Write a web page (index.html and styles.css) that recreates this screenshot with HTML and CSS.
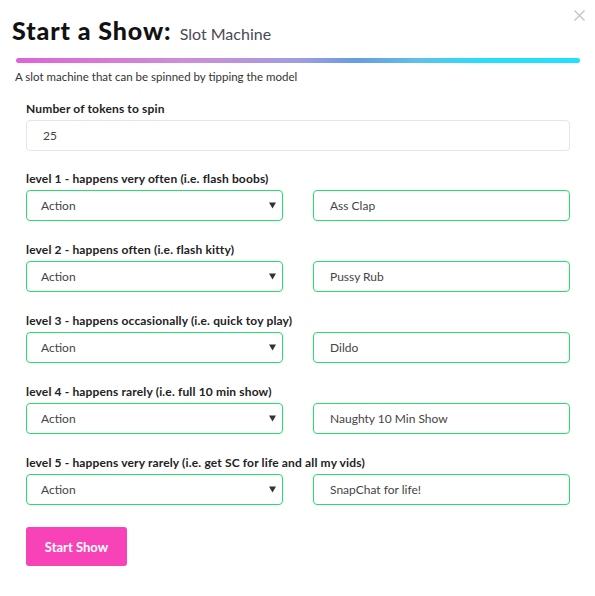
FILE: index.html
```html
<!DOCTYPE html>
<html>
<head>
<meta charset="utf-8">
<link rel="stylesheet" href="styles.css">
</head>
<body>
<div class="modal">
  <button class="close" aria-label="Close">
    <svg width="11" height="11" viewBox="0 0 11 11"><path d="M0.5 0.5 L10.5 10.5 M10.5 0.5 L0.5 10.5" stroke="#c4c4c4" stroke-width="1.4" fill="none"/></svg>
  </button>
  <h1 class="title"><span class="title-main">Start a Show:</span> <span class="title-sub">Slot Machine</span></h1>
  <div class="bar"></div>
  <p class="desc">A slot machine that can be spinned by tipping the model</p>

  <form class="form">
    <div class="group first">
      <label class="label">Number of tokens to spin</label>
      <div class="field plain">25</div>
    </div>

    <div class="group">
      <label class="label">level 1 - happens very often (i.e. flash boobs)</label>
      <div class="row">
        <div class="field ok select"><span>Action</span><svg class="caret" width="7" height="7" viewBox="0 0 7 7"><path d="M0 0.5 H7 L3.5 6.5 Z" fill="#333"/></svg></div>
        <div class="field ok">Ass Clap</div>
      </div>
    </div>

    <div class="group">
      <label class="label">level 2 - happens often (i.e. flash kitty)</label>
      <div class="row">
        <div class="field ok select"><span>Action</span><svg class="caret" width="7" height="7" viewBox="0 0 7 7"><path d="M0 0.5 H7 L3.5 6.5 Z" fill="#333"/></svg></div>
        <div class="field ok">Pussy Rub</div>
      </div>
    </div>

    <div class="group">
      <label class="label">level 3 - happens occasionally (i.e. quick toy play)</label>
      <div class="row">
        <div class="field ok select"><span>Action</span><svg class="caret" width="7" height="7" viewBox="0 0 7 7"><path d="M0 0.5 H7 L3.5 6.5 Z" fill="#333"/></svg></div>
        <div class="field ok">Dildo</div>
      </div>
    </div>

    <div class="group">
      <label class="label">level 4 - happens rarely (i.e. full 10 min show)</label>
      <div class="row">
        <div class="field ok select"><span>Action</span><svg class="caret" width="7" height="7" viewBox="0 0 7 7"><path d="M0 0.5 H7 L3.5 6.5 Z" fill="#333"/></svg></div>
        <div class="field ok">Naughty 10 Min Show</div>
      </div>
    </div>

    <div class="group">
      <label class="label">level 5 - happens very rarely (i.e. get SC for life and all my vids)</label>
      <div class="row">
        <div class="field ok select"><span>Action</span><svg class="caret" width="7" height="7" viewBox="0 0 7 7"><path d="M0 0.5 H7 L3.5 6.5 Z" fill="#333"/></svg></div>
        <div class="field ok">SnapChat for life!</div>
      </div>
    </div>

    <div class="actions">
      <button type="button" class="btn">Start Show</button>
    </div>
  </form>
</div>
</body>
</html>
```

FILE: styles.css
```css
* { box-sizing: border-box; }
html, body {
  margin: 0;
  padding: 0;
  background: #fff;
}
body {
  font-family: Lato, "Open Sans", "Liberation Sans", sans-serif;
  color: #333;
}
.modal {
  position: relative;
  width: 595px;
  height: 596px;
  padding: 12px 15px 0 0;
}
.close {
  position: absolute;
  top: 10px;
  left: 574px;
  padding: 0;
  border: 0;
  background: none;
  line-height: 0;
}
.title {
  margin: 0 0 0 12px;
  line-height: 32px;
  font-weight: normal;
  white-space: nowrap;
}
.title-main {
  font-size: 25px;
  font-weight: 900;
  color: #111;
  letter-spacing: 0.9px;
}
.title-sub {
  font-size: 16px;
  color: #4a4a55;
  margin-left: 0;
}
.bar {
  margin: 8px 0 0 16px;
  height: 5px;
  border-radius: 3px;
  background: linear-gradient(90deg, #e062d8 0%, #cc8ed9 30%, #a19de0 50%, #6a9be2 60%, #5cc3e8 72%, #25defc 82%, #20e0ff 100%);
}
.desc {
  margin: 7px 0 0 15px;
  font-size: 11.5px;
  line-height: 14px;
  color: #333;
}
.form {
  padding: 18px 0 0 26px;
  margin-right: 10px;
}
.group {
  display: flex;
  flex-direction: column;
  margin-bottom: 22px;
}
.group.first {
  margin-bottom: 21px;
}
.label {
  font-size: 12px;
  line-height: 14px;
  font-weight: 700;
  color: #222;
  margin-bottom: 4px;
  white-space: nowrap;
  letter-spacing: 0.15px;
}
.row {
  display: grid;
  grid-template-columns: 1fr 1fr;
  gap: 30px;
}
.field {
  height: 31px;
  border-radius: 4px;
  display: flex;
  align-items: center;
  padding: 0 16px;
  font-size: 12px;
  color: #444;
  min-width: 0;
}
.plain {
  border: 1px solid #e2e6ea;
}
.ok {
  border: 1px solid #22e06c;
}
.select {
  justify-content: space-between;
  padding: 0 4px 0 14px;
}
.caret {
  margin-right: 2px;
}
.actions {
  display: flex;
}
.btn {
  width: 101px;
  height: 39px;
  border: 0;
  border-radius: 3px;
  background: #f743b7;
  color: #fff;
  font-family: Lato, "Open Sans", sans-serif;
  font-size: 13px;
  font-weight: 700;
  padding: 0;
}
```
